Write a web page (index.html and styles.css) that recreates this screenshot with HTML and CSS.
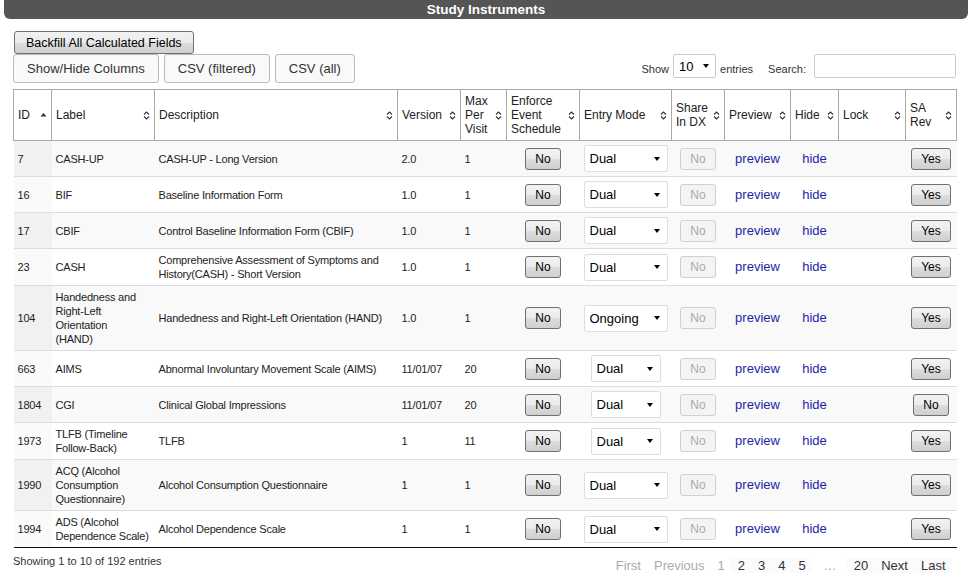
FILE: index.html
```html
<!DOCTYPE html>
<html lang="en">
<head>
  <meta charset="UTF-8">
  <title>Study Instruments</title>
  <link rel="stylesheet" href="styles.css">
</head>
<body>
  <div class="panel">
    <div class="panel-title">Study Instruments</div>
    <div class="panel-body">
      <button type="button" class="btn-classic backfill">Backfill All Calculated Fields</button>

      <div class="toolbar">
        <div class="dt-buttons">
          <button type="button" class="btn-flat">Show/Hide Columns</button>
          <button type="button" class="btn-flat">CSV (filtered)</button>
          <button type="button" class="btn-flat">CSV (all)</button>
        </div>
        <div class="dt-controls">
          <label class="ctl-label">Show</label>
          <span class="sel sel-len"><select><option>10</option></select></span>
          <label class="ctl-label">entries</label>
          <label class="ctl-label search-label">Search:</label>
          <input type="text" class="search">
        </div>
      </div>

      <table class="instruments">
        <colgroup>
          <col style="width:38px"><col style="width:103px"><col style="width:243px"><col style="width:63px">
          <col style="width:46px"><col style="width:73px"><col style="width:92px"><col style="width:53px">
          <col style="width:66px"><col style="width:48px"><col style="width:67px"><col style="width:51px">
        </colgroup>
        <thead>
          <tr>
            <th><div class="th-in"><span>ID</span><svg class="sort" width="7" height="11" viewBox="0 0 7 11"><path d="M0.5 6.5 L3.5 3 L6.5 6.5 Z" fill="#333"/></svg></div></th>
            <th><div class="th-in"><span>Label</span><svg class="sort" width="7" height="11" viewBox="0 0 7 11"><path d="M1 4.5 L3.5 2 L6 4.5 M1 6.5 L3.5 9 L6 6.5" fill="none" stroke="#333" stroke-width="1.1"/></svg></div></th>
            <th><div class="th-in"><span>Description</span><svg class="sort" width="7" height="11" viewBox="0 0 7 11"><path d="M1 4.5 L3.5 2 L6 4.5 M1 6.5 L3.5 9 L6 6.5" fill="none" stroke="#333" stroke-width="1.1"/></svg></div></th>
            <th><div class="th-in"><span>Version</span><svg class="sort" width="7" height="11" viewBox="0 0 7 11"><path d="M1 4.5 L3.5 2 L6 4.5 M1 6.5 L3.5 9 L6 6.5" fill="none" stroke="#333" stroke-width="1.1"/></svg></div></th>
            <th><div class="th-in"><span>Max Per Visit</span><svg class="sort" width="7" height="11" viewBox="0 0 7 11"><path d="M1 4.5 L3.5 2 L6 4.5 M1 6.5 L3.5 9 L6 6.5" fill="none" stroke="#333" stroke-width="1.1"/></svg></div></th>
            <th><div class="th-in"><span>Enforce Event Schedule</span><svg class="sort" width="7" height="11" viewBox="0 0 7 11"><path d="M1 4.5 L3.5 2 L6 4.5 M1 6.5 L3.5 9 L6 6.5" fill="none" stroke="#333" stroke-width="1.1"/></svg></div></th>
            <th><div class="th-in"><span>Entry Mode</span><svg class="sort" width="7" height="11" viewBox="0 0 7 11"><path d="M1 4.5 L3.5 2 L6 4.5 M1 6.5 L3.5 9 L6 6.5" fill="none" stroke="#333" stroke-width="1.1"/></svg></div></th>
            <th><div class="th-in"><span>Share In DX</span><svg class="sort" width="7" height="11" viewBox="0 0 7 11"><path d="M1 4.5 L3.5 2 L6 4.5 M1 6.5 L3.5 9 L6 6.5" fill="none" stroke="#333" stroke-width="1.1"/></svg></div></th>
            <th><div class="th-in"><span>Preview</span><svg class="sort" width="7" height="11" viewBox="0 0 7 11"><path d="M1 4.5 L3.5 2 L6 4.5 M1 6.5 L3.5 9 L6 6.5" fill="none" stroke="#333" stroke-width="1.1"/></svg></div></th>
            <th><div class="th-in"><span>Hide</span><svg class="sort" width="7" height="11" viewBox="0 0 7 11"><path d="M1 4.5 L3.5 2 L6 4.5 M1 6.5 L3.5 9 L6 6.5" fill="none" stroke="#333" stroke-width="1.1"/></svg></div></th>
            <th><div class="th-in"><span>Lock</span><svg class="sort" width="7" height="11" viewBox="0 0 7 11"><path d="M1 4.5 L3.5 2 L6 4.5 M1 6.5 L3.5 9 L6 6.5" fill="none" stroke="#333" stroke-width="1.1"/></svg></div></th>
            <th><div class="th-in"><span>SA Rev</span><svg class="sort" width="7" height="11" viewBox="0 0 7 11"><path d="M1 4.5 L3.5 2 L6 4.5 M1 6.5 L3.5 9 L6 6.5" fill="none" stroke="#333" stroke-width="1.1"/></svg></div></th>
          </tr>
        </thead>
        <tbody>
          <tr>
            <td class="sorted">7</td><td>CASH-UP</td><td>CASH-UP - Long Version</td><td>2.0</td><td>1</td>
            <td class="c"><button class="btn-classic yn">No</button></td>
            <td class="c"><span class="sel sel-wide"><select><option>Dual</option></select></span></td>
            <td class="c"><button class="yn-off" disabled>No</button></td>
            <td class="c"><a href="#">preview</a></td><td class="c"><a href="#">hide</a></td><td></td>
            <td class="c"><button class="btn-classic yn">Yes</button></td>
          </tr>
          <tr>
            <td class="sorted">16</td><td>BIF</td><td>Baseline Information Form</td><td>1.0</td><td>1</td>
            <td class="c"><button class="btn-classic yn">No</button></td>
            <td class="c"><span class="sel sel-wide"><select><option>Dual</option></select></span></td>
            <td class="c"><button class="yn-off" disabled>No</button></td>
            <td class="c"><a href="#">preview</a></td><td class="c"><a href="#">hide</a></td><td></td>
            <td class="c"><button class="btn-classic yn">Yes</button></td>
          </tr>
          <tr>
            <td class="sorted">17</td><td>CBIF</td><td>Control Baseline Information Form (CBIF)</td><td>1.0</td><td>1</td>
            <td class="c"><button class="btn-classic yn">No</button></td>
            <td class="c"><span class="sel sel-wide"><select><option>Dual</option></select></span></td>
            <td class="c"><button class="yn-off" disabled>No</button></td>
            <td class="c"><a href="#">preview</a></td><td class="c"><a href="#">hide</a></td><td></td>
            <td class="c"><button class="btn-classic yn">Yes</button></td>
          </tr>
          <tr>
            <td class="sorted">23</td><td>CASH</td><td>Comprehensive Assessment of Symptoms and History(CASH) - Short Version</td><td>1.0</td><td>1</td>
            <td class="c"><button class="btn-classic yn">No</button></td>
            <td class="c"><span class="sel sel-wide"><select><option>Dual</option></select></span></td>
            <td class="c"><button class="yn-off" disabled>No</button></td>
            <td class="c"><a href="#">preview</a></td><td class="c"><a href="#">hide</a></td><td></td>
            <td class="c"><button class="btn-classic yn">Yes</button></td>
          </tr>
          <tr>
            <td class="sorted">104</td><td>Handedness and Right-Left Orientation<br>(HAND)</td><td>Handedness and Right-Left Orientation (HAND)</td><td>1.0</td><td>1</td>
            <td class="c"><button class="btn-classic yn">No</button></td>
            <td class="c"><span class="sel sel-wide"><select><option>Ongoing</option></select></span></td>
            <td class="c"><button class="yn-off" disabled>No</button></td>
            <td class="c"><a href="#">preview</a></td><td class="c"><a href="#">hide</a></td><td></td>
            <td class="c"><button class="btn-classic yn">Yes</button></td>
          </tr>
          <tr>
            <td class="sorted">663</td><td>AIMS</td><td>Abnormal Involuntary Movement Scale (AIMS)</td><td>11/01/07</td><td>20</td>
            <td class="c"><button class="btn-classic yn">No</button></td>
            <td class="c"><span class="sel sel-narrow"><select><option>Dual</option></select></span></td>
            <td class="c"><button class="yn-off" disabled>No</button></td>
            <td class="c"><a href="#">preview</a></td><td class="c"><a href="#">hide</a></td><td></td>
            <td class="c"><button class="btn-classic yn">Yes</button></td>
          </tr>
          <tr>
            <td class="sorted">1804</td><td>CGI</td><td>Clinical Global Impressions</td><td>11/01/07</td><td>20</td>
            <td class="c"><button class="btn-classic yn">No</button></td>
            <td class="c"><span class="sel sel-narrow"><select><option>Dual</option></select></span></td>
            <td class="c"><button class="yn-off" disabled>No</button></td>
            <td class="c"><a href="#">preview</a></td><td class="c"><a href="#">hide</a></td><td></td>
            <td class="c"><button class="btn-classic yn">No</button></td>
          </tr>
          <tr>
            <td class="sorted">1973</td><td>TLFB (Timeline Follow-Back)</td><td>TLFB</td><td>1</td><td>11</td>
            <td class="c"><button class="btn-classic yn">No</button></td>
            <td class="c"><span class="sel sel-narrow"><select><option>Dual</option></select></span></td>
            <td class="c"><button class="yn-off" disabled>No</button></td>
            <td class="c"><a href="#">preview</a></td><td class="c"><a href="#">hide</a></td><td></td>
            <td class="c"><button class="btn-classic yn">Yes</button></td>
          </tr>
          <tr>
            <td class="sorted">1990</td><td>ACQ (Alcohol Consumption Questionnaire)</td><td>Alcohol Consumption Questionnaire</td><td>1</td><td>1</td>
            <td class="c"><button class="btn-classic yn">No</button></td>
            <td class="c"><span class="sel sel-wide"><select><option>Dual</option></select></span></td>
            <td class="c"><button class="yn-off" disabled>No</button></td>
            <td class="c"><a href="#">preview</a></td><td class="c"><a href="#">hide</a></td><td></td>
            <td class="c"><button class="btn-classic yn">Yes</button></td>
          </tr>
          <tr>
            <td class="sorted">1994</td><td>ADS (Alcohol Dependence Scale)</td><td>Alcohol Dependence Scale</td><td>1</td><td>1</td>
            <td class="c"><button class="btn-classic yn">No</button></td>
            <td class="c"><span class="sel sel-wide"><select><option>Dual</option></select></span></td>
            <td class="c"><button class="yn-off" disabled>No</button></td>
            <td class="c"><a href="#">preview</a></td><td class="c"><a href="#">hide</a></td><td></td>
            <td class="c"><button class="btn-classic yn">Yes</button></td>
          </tr>
        </tbody>
      </table>

      <div class="dt-footer">
        <div class="dt-info">Showing 1 to 10 of 192 entries</div>
        <div class="paginate">
          <a class="pg off">First</a>
          <a class="pg off">Previous</a>
          <a class="pg off">1</a>
          <span class="pg-group"><a class="pg">2</a><a class="pg">3</a><a class="pg">4</a><a class="pg">5</a></span>
          <span class="pg off ellipsis">…</span>
          <span class="pg-group"><a class="pg">20</a><a class="pg">Next</a><a class="pg">Last</a></span>
        </div>
      </div>
    </div>
  </div>
</body>
</html>
```
FILE: styles.css
```css
body {
  margin: 0;
  font-family: "Liberation Sans", Arial, sans-serif;
  color: #222;
  background-color: #fff;
}

.panel {
  margin: 0 4px;
}

.panel-title {
  background-color: #555;
  color: #fff;
  font-weight: bold;
  font-size: 13.5px;
  height: 19px;
  line-height: 19px;
  text-align: center;
  border-radius: 0 0 6px 6px;
}

.panel-body {
  padding: 12px 12px 0 9px;
}

.btn-classic {
  font-family: "Liberation Sans", Arial, sans-serif;
  color: #000;
  border: 1px solid #707070;
  border-radius: 3px;
  background: linear-gradient(#f2f2f2, #ebebeb 50%, #dddddd 51%, #cfcfcf);
  cursor: pointer;
}

.backfill {
  display: block;
  font-size: 12.5px;
  height: 23px;
  padding: 0 11px;
  margin-left: 1px;
}

.toolbar {
  display: flex;
  justify-content: space-between;
  align-items: flex-start;
}

.dt-buttons {
  display: flex;
  gap: 5px;
}

.btn-flat {
  font-family: "Liberation Sans", Arial, sans-serif;
  font-size: 13px;
  color: #333;
  height: 29px;
  padding: 0 13px;
  border: 1px solid #bbb;
  border-radius: 3px;
  background-color: #f9f9f9;
  cursor: pointer;
}

.dt-controls {
  display: flex;
  align-items: center;
  font-size: 11px;
  color: #333;
}

.ctl-label {
  margin-top: 5px;
}

.search-label {
  margin-left: 15px;
  margin-right: 8px;
}

.sel {
  position: relative;
  display: inline-block;
}

.sel::after {
  content: "";
  position: absolute;
  top: 50%;
  right: 8px;
  margin-top: -2px;
  border-left: 3.5px solid transparent;
  border-right: 3.5px solid transparent;
  border-top: 4px solid #000;
  pointer-events: none;
}

.sel select {
  appearance: none;
  -webkit-appearance: none;
  font-family: "Liberation Sans", Arial, sans-serif;
  font-size: 13px;
  color: #000;
  background-color: #fff;
  border: 1px solid #ddd;
  border-radius: 2px;
  padding: 0 0 0 5px;
  margin: 0;
  display: block;
}

.sel-len {
  margin: 0 4px;
}

.sel-len select {
  width: 43px;
  height: 24px;
  border-color: #c8c8c8;
}

.sel-len::after {
  right: 7px;
}

.sel-wide select {
  width: 84px;
  height: 27px;
}

.sel-narrow select {
  width: 70px;
  height: 27px;
}

.search {
  width: 142px;
  height: 24px;
  box-sizing: border-box;
  border: 1px solid #ccc;
  border-radius: 2px;
  margin: 0;
}

.instruments {
  width: 100%;
  margin-top: 6px;
  border-collapse: collapse;
  table-layout: fixed;
  border-bottom: 1px solid #111;
}

.instruments th {
  border: 1px solid #aaa;
  padding: 4px;
  font-size: 12px;
  line-height: 14px;
  font-weight: normal;
  text-align: left;
  color: #222;
  background-color: #fff;
}

.th-in {
  display: flex;
  align-items: center;
  justify-content: space-between;
  gap: 3px;
}

.sort {
  flex-shrink: 0;
}

.instruments td {
  padding: 4px;
  font-size: 11px;
  letter-spacing: -0.2px;
  line-height: 14px;
  border-top: 1px solid #ddd;
  vertical-align: middle;
  height: 27px;
  box-sizing: content-box;
}

.instruments tbody tr:nth-child(odd) {
  background-color: #f9f9f9;
}

.instruments tbody tr:nth-child(odd) td.sorted {
  background-color: #f1f1f1;
}

.instruments tbody tr:nth-child(even) td.sorted {
  background-color: #fafafa;
}

.instruments td.c {
  text-align: center;
  letter-spacing: 0;
}

.instruments td .sel {
  vertical-align: middle;
}

.yn {
  font-size: 12px;
  height: 22px;
  padding: 0 9.5px;
}

.yn-off {
  font-family: "Liberation Sans", Arial, sans-serif;
  font-size: 12px;
  height: 22px;
  padding: 0 9.5px;
  color: #aaa;
  border: 1px solid #d0d0d0;
  border-radius: 3px;
  background-color: #f4f4f4;
}

.instruments a {
  font-size: 13px;
  color: #1e1ea8;
  text-decoration: none;
}

.dt-footer {
  display: flex;
  justify-content: space-between;
  align-items: flex-start;
}

.dt-info {
  font-size: 11px;
  color: #333;
  padding-top: 7px;
}

.paginate {
  display: flex;
  align-items: center;
  padding-top: 10px;
  padding-right: 4px;
  font-size: 13px;
  line-height: 15px;
}

.pg-group {
  display: flex;
  background-color: #fbfbfb;
}

.pg {
  padding: 0 6.5px;
  color: #333;
  cursor: pointer;
}

.pg.off {
  color: #aaa;
  cursor: default;
}

.ellipsis {
  padding: 0 11px;
}
```
